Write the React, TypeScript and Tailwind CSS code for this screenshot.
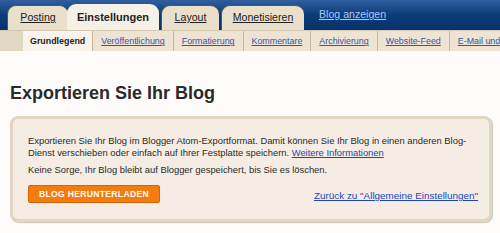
const tabs = [
  { label: "Posting", active: false, w: "w-[61px]" },
  { label: "Einstellungen", active: true, w: "w-[92px]" },
  { label: "Layout", active: false, w: "w-[58px] ml-[2px]" },
  { label: "Monetisieren", active: false, w: "w-[83px] ml-[2px]" },
];

const subTabs = [
  "Veröffentlichung",
  "Formatierung",
  "Kommentare",
  "Archivierung",
  "Website-Feed",
  "E-Mail und Mobil",
];

export default function App() {
  return (
    <div className="w-[500px] h-[233px] overflow-hidden bg-[#fdfcfa] font-['Liberation_Sans',Arial,sans-serif] text-[#2a2a2a]">
      {/* Top navigation */}
      <div className="h-[30px] bg-gradient-to-b from-[#2f5f9f] via-[#0c3c78] to-[#05326c] flex items-end pl-[7px]">
        {tabs.map((t) =>
          t.active ? (
            <div
              key={t.label}
              className={`${t.w} relative z-10 -ml-[1px] h-[26px] shrink-0 rounded-t-[9px] bg-[#f6f1e7] flex items-center justify-center text-[11px] font-bold text-[#222]`}
            >
              {t.label}
            </div>
          ) : (
            <div
              key={t.label}
              className={`${t.w} h-[25px] shrink-0 rounded-t-[9px] bg-[#e9dfcb] border-l border-t border-[#5d5440] flex items-center justify-center text-[10.6px] text-[#222] underline`}
            >
              {t.label}
            </div>
          )
        )}
        <a className="ml-[15px] mb-[7px] shrink-0 text-[10.6px] text-[#a8c6ff] underline">Blog anzeigen</a>
      </div>

      {/* Sub navigation */}
      <div className="h-[21px] flex bg-[#ede4d3] border-t border-[#d6c9b1] text-[8.9px] whitespace-nowrap">
        <div className="w-[23px] shrink-0 bg-[#e3d8c4]" />
        <div className="shrink-0 px-[7px] flex items-center pt-[2px] bg-[#f8f4ed] font-bold text-[#222] border-r border-[#c6b89f]">
          Grundlegend
        </div>
        {subTabs.map((s) => (
          <a
            key={s}
            className="shrink-0 px-[8px] flex items-center pt-[2px] text-[#3355aa] underline border-r border-[#c6b89f]"
          >
            {s}
          </a>
        ))}
      </div>

      {/* Content */}
      <div className="pl-[10px] pr-[8px]">
        <h1 className="mt-[31px] text-[18px] leading-[22px] font-bold text-[#2a2a2a]">
          Exportieren Sie Ihr Blog
        </h1>
        <div className="mt-[12px] rounded-[8px] border-[3px] border-[#e2d6c3] bg-[#f5ede3] shadow-[1px_1px_1px_rgba(120,100,70,0.35)] pl-[15px] pr-[8px] pt-[16px] pb-[16px] text-[9.4px] leading-[12px]">
          <p className="leading-[12px]">
            Exportieren Sie Ihr Blog im Blogger Atom-Exportformat. Damit können Sie Ihr Blog in einen anderen Blog-Dienst verschieben oder einfach auf Ihrer Festplatte speichern.{" "}
            <a className="text-[#2244bb] underline">Weitere Informationen</a>
          </p>
          <p className="mt-[5px] leading-[12px]">
            Keine Sorge, Ihr Blog bleibt auf Blogger gespeichert, bis Sie es löschen.
          </p>
          <div className="mt-[9px] flex items-center justify-between">
            <button className="h-[18px] w-[132px] rounded-[2px] bg-[#f47b10] border border-[#d96300] text-white font-bold text-[8.6px] tracking-[0.3px]">
              BLOG HERUNTERLADEN
            </button>
            <a className="mr-[3px] mt-[4px] text-[9.9px] text-[#2244bb] underline">
              Zurück zu "Allgemeine Einstellungen"
            </a>
          </div>
        </div>
      </div>
    </div>
  );
}
